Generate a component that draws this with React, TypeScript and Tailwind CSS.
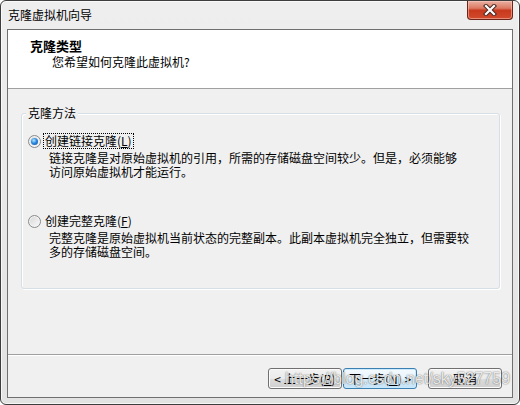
const ui = { fontFamily: '"Noto Sans CJK SC", "Liberation Sans", sans-serif' };

type RadioProps = {
  checked?: boolean;
  focused?: boolean;
  label: string;
  hotkey: string;
};

const Radio = ({ checked, focused, label, hotkey }: RadioProps) => (
  <div className="flex h-[16px] items-center">
    <span className="flex h-[13px] w-[13px] items-center justify-center rounded-full border border-[#8a8a8a] bg-gradient-to-br from-[#d6d6d6] to-[#fbfbfb] shadow-[inset_0_0_0_1px_#f4f4f4]">
      {checked ? (
        <span className="h-[7px] w-[7px] rounded-full bg-[radial-gradient(circle_at_40%_35%,#b9e8ff_0%,#2c8ae0_45%,#0e4a9c_100%)]" />
      ) : null}
    </span>
    <span
      className={
        focused
          ? "ml-[2px] border border-dotted border-black px-[1px] leading-[14px]"
          : "ml-[3px] px-[1px] leading-[14px]"
      }
    >
      {label}(<span className="underline">{hotkey}</span>)
    </span>
  </div>
);

const Button = ({ children, primary, className }: { children: React.ReactNode; primary?: boolean; className?: string }) => (
  <button
    type="button"
    className={
      (primary
        ? "border-[#3c7fb1] bg-[linear-gradient(#f4fafe_0%,#e8f4fc_50%,#d6ecf9_50%,#c6e4f7_100%)] shadow-[inset_0_0_0_1px_#c9ebfd] "
        : "border-[#707070] bg-[linear-gradient(#f2f2f2_0%,#ebebeb_50%,#dddddd_50%,#cfcfcf_100%)] shadow-[inset_0_0_0_1px_#fbfbfb] ") +
      "flex h-[21px] w-[74px] items-center justify-center rounded-[3px] border text-[12px] leading-[14px] text-black " +
      (className ?? "")
    }
  >
    {children}
  </button>
);

export default function App() {
  return (
    <div className="h-[405px] w-[520px] bg-white text-[12px] text-black" style={ui}>
      <div className="relative flex h-[405px] w-[520px] flex-col rounded-[6px] border border-[#3d3d3d] bg-gradient-to-b from-[#eeeeee] to-[#e2e2e2] shadow-[inset_0_0_0_1px_rgba(255,255,255,0.7)]">
        {/* caption */}
        <div className="flex h-[28px] items-start justify-between">
          <span className="pl-[7px] pt-[6px] text-[12px] leading-[16px]">克隆虚拟机向导</span>
          <div className="mr-[6px] flex h-[19px] w-[46px] items-center justify-center rounded-b-[4px] border border-t-0 border-[#6a2418] bg-[linear-gradient(#eab0a2_0%,#dc7963_40%,#c8391d_52%,#d24a2c_100%)] shadow-[inset_0_0_0_1px_rgba(255,210,200,0.5)]">
            <svg width="14" height="12" viewBox="0 0 14 12">
              <path d="M3 2 L11 10 M11 2 L3 10" stroke="#4a2a24" strokeWidth="4.2" strokeLinecap="square" />
              <path d="M3 2 L11 10 M11 2 L3 10" stroke="#ffffff" strokeWidth="2.2" strokeLinecap="square" />
            </svg>
          </div>
        </div>

        {/* client area */}
        <div className="ml-[6px] flex h-[369px] w-[506px] flex-col border border-[#6f6f6f] bg-[#f0f0f0]">
          <div className="h-[59px] border-b border-[#a0a0a0] bg-white pt-[8px]">
            <div className="pl-[22px] text-[13px] font-bold leading-[16px]">克隆类型</div>
            <div className="pl-[44px] leading-[16px]">您希望如何克隆此虚拟机?</div>
          </div>

          <div className="h-[265px] pt-[24px]">
            <div className="relative ml-[13px] h-[176px] w-[479px] rounded-[3px] border border-[#d5dfe5] shadow-[inset_1px_1px_0_#ffffff,1px_1px_0_#ffffff]">
              <span className="absolute -top-[9px] left-[4px] bg-[#f0f0f0] px-[2px] leading-[16px]">克隆方法</span>
              <div className="pl-[6px] pt-[19px]">
                <Radio checked focused label="创建链接克隆" hotkey="L" />
                <div className="ml-[21px] mt-[2px] leading-[14px]">
                  链接克隆是对原始虚拟机的引用，所需的存储磁盘空间较少。但是，必须能够
                  <br />
                  访问原始虚拟机才能运行。
                </div>
                <div className="mt-[34px]">
                  <Radio label="创建完整克隆" hotkey="F" />
                </div>
                <div className="ml-[21px] mt-[2px] leading-[14px]">
                  完整克隆是原始虚拟机当前状态的完整副本。此副本虚拟机完全独立，但需要较
                  <br />
                  多的存储磁盘空间。
                </div>
              </div>
            </div>
          </div>

          <div className="flex flex-1 items-start justify-end border-t border-[#a0a0a0] pr-[10px] pt-[13px] shadow-[inset_0_1px_0_#ffffff]">
            <Button className="mr-[1px]">
              &lt; 上一步(<span className="underline">B</span>)
            </Button>
            <Button primary className="mr-[11px]">
              下一步(<span className="underline">N</span>) &gt;
            </Button>
            <Button>取消</Button>
          </div>
        </div>

        {/* watermark */}
        <span
          className="pointer-events-none absolute left-[284px] top-[369px] text-[16px] leading-[18px] text-white/85 [text-shadow:0_0_1px_rgba(0,0,0,0.55),0_0_2px_rgba(0,0,0,0.25)]"
          style={{ fontFamily: '"Liberation Sans", sans-serif' }}
        >
          https://blog.csdn.net/sky527759
        </span>
      </div>
    </div>
  );
}
